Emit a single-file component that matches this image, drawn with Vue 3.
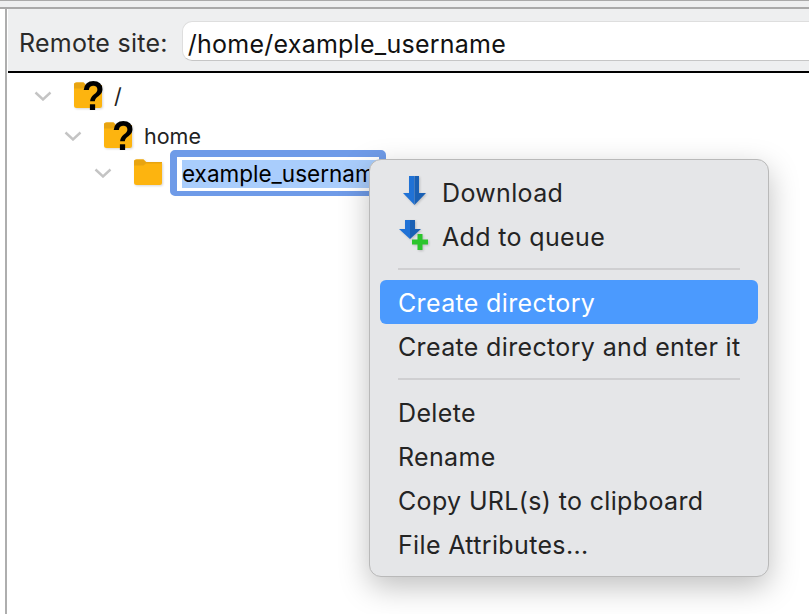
<script setup>
const rows = [
  { label: '/', indent: 30 },
  { label: 'home', indent: 60 }
]
const items = ['Delete', 'Rename', 'Copy URL(s) to clipboard', 'File Attributes...']
</script>

<template>
  <div class="page">
    <div class="top-strip"></div>
    <div class="pane">
      <div class="site-bar">
        <span class="site-label">Remote site:</span>
        <div class="site-input">/home/example_username</div>
      </div>
      <div class="tree">
        <div v-for="r in rows" :key="r.label" class="row" :style="{ paddingLeft: r.indent + 'px' }">
          <svg class="chev" width="18" height="10" viewBox="0 0 18 10"><path d="M1.5 1.5 L9 8.5 L16.5 1.5" fill="none" stroke="#c4c4c4" stroke-width="2.4"/></svg>
          <span class="folder">
            <svg class="folder-svg" width="30" height="30" viewBox="0 0 30 30"><path d="M0 4 a2.5 2.5 0 0 1 2.5-2.5 h7 l2.5 2.5 h14 a2 2 0 0 1 2 2 v19 a2 2 0 0 1-2 2 H2.5 a2.5 2.5 0 0 1-2.5-2.500 Z" fill="#fdb40f"/><path d="M0 4 a2.5 2.5 0 0 1 2.5-2.5 h7 l2.5 2.5 h16 v1.5 h-16 l-2.5 2 H0 Z" fill="#e8a410"/></svg>
            <span class="q">?</span>
          </span>
          <span class="name">{{ r.label }}</span>
        </div>
        <div class="row edit-row">
          <svg class="chev" width="18" height="10" viewBox="0 0 18 10"><path d="M1.5 1.5 L9 8.5 L16.5 1.5" fill="none" stroke="#c4c4c4" stroke-width="2.4"/></svg>
          <span class="folder">
            <svg class="folder-svg" width="30" height="30" viewBox="0 0 30 30"><path d="M0 4 a2.5 2.5 0 0 1 2.5-2.5 h7 l2.5 2.5 h14 a2 2 0 0 1 2 2 v19 a2 2 0 0 1-2 2 H2.5 a2.5 2.5 0 0 1-2.5-2.500 Z" fill="#fdb40f"/><path d="M0 4 a2.5 2.5 0 0 1 2.5-2.5 h7 l2.5 2.5 h16 v1.5 h-16 l-2.5 2 H0 Z" fill="#e8a410"/></svg>
          </span>
          <div class="edit"><span class="sel">example_username</span></div>
        </div>
      </div>
      <div class="menu">
        <div class="item icon-item">
          <svg class="menu-icon" width="32" height="32" viewBox="0 0 32 32">
            <path d="M12 0 h5.5 v29 L6 17 h6 Z" fill="#2072d6"/>
            <path d="M17.5 0 H22 v17 h7 L17.5 29 Z" fill="#1a60b4"/>
          </svg>
          <span class="lbl">Download</span>
        </div>
        <div class="item icon-item">
          <svg class="menu-icon" width="32" height="32" viewBox="0 0 32 32">
            <path d="M8 0 h5 v19 L2 9 h6 Z" fill="#2072d6"/>
            <path d="M13 0 h5 v9 h6 L13 19 Z" fill="#1a60b4"/>
            <path d="M20.5 14 h5 v5.500 H31 v5 h-5.500 V30 h-5 v-5.500 H15 v-5 h5.500 Z" fill="#2cc52c"/>
          </svg>
          <span class="lbl">Add to queue</span>
        </div>
        <div class="sep"></div>
        <div class="item hi"><span class="lbl">Create directory</span></div>
        <div class="item"><span class="lbl">Create directory and enter it</span></div>
        <div class="sep"></div>
        <div v-for="t in items" :key="t" class="item"><span class="lbl">{{ t }}</span></div>
      </div>
    </div>
  </div>
</template>

<style>
html, body { margin: 0; background: #fff; }
</style>

<style scoped>
.page {
  width: 809px;
  height: 614px;
  overflow: hidden;
  background: #fff;
  font-family: Inter, "Liberation Sans", sans-serif;
}
.top-strip {
  height: 6px;
  background: #eeeff0;
  border-top: 1px solid #a9a9a9;
  border-bottom: 2px solid #a9a9a9;
}
.pane {
  margin-left: 5px;
  border-left: 2px solid #aeaeae;
  padding-left: 1px;
  height: 605px;
  position: relative;
}
.site-bar {
  height: 64px;
  box-sizing: border-box;
  background: #eeeff0;
  border-bottom: 2px solid #000;
  display: flex;
  align-items: flex-start;
  padding: 12px 0 0 11px;
  gap: 14px;
}
.site-label {
  font-size: 25px;
  letter-spacing: 0.25px;
  color: #2a2a2a;
  line-height: 40px;
  padding-top: 2px;
}
.site-input {
  flex: 1;
  height: 40px;
  box-sizing: border-box;
  background: #fff;
  border: 1px solid #dedede;
  border-bottom-color: #c6c6c6;
  border-right: none;
  border-radius: 10px 0 0 10px;
  font-size: 25px;
  letter-spacing: 0.25px;
  color: #111;
  line-height: 38px;
  padding: 3px 0 0 5px;
}
.tree { padding-top: 3px; }
.row {
  height: 40px;
  display: flex;
  align-items: center;
}
.chev { flex: none; margin-left: -4px; margin-right: 22px; }
.folder { position: relative; width: 30px; height: 30px; margin-right: 10px; flex: none; }
.folder-svg { display: block; filter: drop-shadow(1px 1px 1px rgba(0, 0, 0, 0.16)); }
.q {
  position: absolute;
  left: 8px;
  top: -5px;
  font-size: 37px;
  line-height: 40px;
  font-weight: 700;
  color: #000;
  font-family: "Liberation Sans", sans-serif;
  transform: scaleY(1.16);
}
.name { font-size: 21.5px; color: #222; }
.edit-row {
  padding-left: 90px;
  height: 46px;
  margin-top: -6px;
}
.edit {
  border: 7px solid #6f9be8;
  border-bottom-width: 5px;
  border-radius: 5px;
  background: #fff;
  padding: 3px 1px 3px 5px;
  width: 216px;
  box-sizing: border-box;
  height: 46px;
  margin-left: -4px;
  flex: none;
}
.sel {
  background: #a9cdfc;
  color: #000;
  font-size: 22.5px;
  line-height: 28px;
  display: block;
  white-space: nowrap;
}
.menu {
  position: absolute;
  left: 362px;
  top: 150px;
  width: 400px;
  height: 418px;
  box-sizing: border-box;
  background: #e5e6e8;
  border: 1px solid #b9b9b9;
  border-radius: 12px;
  box-shadow: 0 10px 30px rgba(0, 0, 0, 0.25);
  padding: 10px 10px 9px 10px;
  font-size: 25px;
  letter-spacing: 0.35px;
  color: #242424;
}
.item {
  height: 44px;
  line-height: 44px;
  padding-left: 18px;
  border-radius: 6px;
  white-space: nowrap;
  display: flex;
  align-items: center;
}
.lbl { padding-top: 2px; }
.icon-item { gap: 13px; padding-left: 17px; }
.menu-icon { flex: none; filter: drop-shadow(1px 1px 1px rgba(0, 0, 0, 0.18)); }
.hi { background: #4b9afe; color: #fff; }
.sep { height: 2px; background: #cfcfd1; margin: 10px 18px; }
</style>
